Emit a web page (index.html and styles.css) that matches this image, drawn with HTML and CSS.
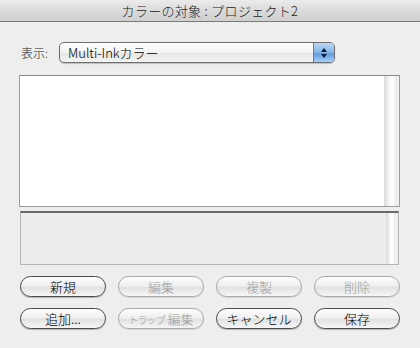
FILE: index.html
```html
<!DOCTYPE html>
<html lang="ja">
<head>
<meta charset="UTF-8">
<title>カラーの対象 : プロジェクト2</title>
<link rel="stylesheet" href="styles.css">
</head>
<body>
    <div class="window">
        <div class="titlebar">カラーの対象 : プロジェクト2</div>
        <div class="content">
            <div class="show-row">
                <span class="show-label">表示:</span>
                <div class="popup">
                    <span class="popup-text">Multi-Inkカラー</span>
                    <span class="popup-arrows">
                        <svg width="8" height="12" viewBox="0 0 8 12">
                            <path d="M4 1 L7 5 L1 5 Z" fill="#0d1d3a"/>
                            <path d="M4 11 L7 7 L1 7 Z" fill="#0d1d3a"/>
                        </svg>
                    </span>
                </div>
            </div>
            <div class="list">
                <div class="list-body"></div>
                <div class="scroll"></div>
            </div>
            <div class="info">
                <div class="info-body"></div>
                <div class="scroll scroll-small"></div>
            </div>
            <div class="buttons">
                <button class="btn">新規</button>
                <button class="btn" disabled>編集</button>
                <button class="btn" disabled>複製</button>
                <button class="btn" disabled>削除</button>
                <button class="btn">追加...</button>
                <button class="btn" disabled><span class="small-kana">トラップ</span> 編集</button>
                <button class="btn">キャンセル</button>
                <button class="btn">保存</button>
            </div>
        </div>
    </div>
</body>
</html>
```

FILE: styles.css
```css
body {
    margin: 0;
    padding: 0;
    background-color: #eeeeee;
    font-family: "Noto Sans CJK JP", "Noto Sans", sans-serif;
    font-size: 13px;
    font-weight: 300;
    color: #111;
}

.window {
    width: 420px;
    height: 348px;
    background-color: #eeeeee;
}

.titlebar {
    height: 21px;
    line-height: 21px;
    text-align: center;
    font-size: 13px;
    color: #222;
    letter-spacing: 0.3px;
    background: linear-gradient(#ececec, #dadada 50%, #cfcfcf);
    border-bottom: 1px solid #7a7a7a;
}

.content {
    padding: 20px 20px 0 20px;
}

.show-row {
    display: flex;
    align-items: center;
    gap: 7px;
    height: 21px;
}

.show-label {
    width: 31px;
    padding-left: 1px;
    font-size: 12px;
    color: #222;
}

.popup {
    display: flex;
    width: 274px;
    height: 19px;
    border: 1px solid #6e6e6e;
    border-radius: 5px;
    background: linear-gradient(#ffffff, #f3f3f3 50%, #e6e6e6 55%, #f4f4f4);
    box-shadow: 0 1px 1px rgba(0, 0, 0, 0.2);
    overflow: hidden;
}

.popup-text {
    flex: 1;
    padding-left: 8px;
    line-height: 19px;
    font-size: 13px;
    color: #000;
}

.popup-arrows {
    width: 20px;
    display: flex;
    align-items: center;
    justify-content: center;
    background: linear-gradient(#bcd8f5, #82b4ea 50%, #5d9ce2 55%, #a7d0f7);
    border-left: 1px solid #5a7fb0;
}

.list {
    display: flex;
    margin-top: 12px;
    height: 130px;
    border: 1px solid #9c9c9c;
    border-top-color: #8a8a8a;
    width: 379px;
    margin-left: -1px;
}

.list-body {
    flex: 1;
    background-color: #fff;
}

.scroll {
    width: 15px;
    background: linear-gradient(to right, #d7d7d7, #f3f3f3 30%, #ffffff 55%, #e9e9e9 85%, #f5f5f5);
}

.info {
    display: flex;
    margin-top: 4px;
    height: 51px;
    width: 377px;
    border: 1px solid #b5b5b5;
    border-top: 2px solid #6b6b6b;
    background-color: #ededed;
}

.info-body {
    flex: 1;
}

.scroll-small {
    width: 11px;
    margin-right: 1px;
}

.buttons {
    display: grid;
    grid-template-columns: repeat(4, 86px);
    column-gap: 12px;
    row-gap: 11px;
    margin-top: 11px;
}

.btn {
    height: 21px;
    padding: 0;
    border: 1px solid #4a4a4a;
    border-radius: 11px;
    background: linear-gradient(#fdfdfd, #f0f0f0 45%, #e2e2e2 55%, #f6f6f6);
    box-shadow: 0 1px 1px rgba(0, 0, 0, 0.25);
    font-family: "Noto Sans CJK JP", "Noto Sans", sans-serif;
    font-size: 13px;
    font-weight: 300;
    color: #000;
    line-height: 19px;
}

.btn:disabled {
    border-color: #a8a8a8;
    color: #a0a0a0;
    box-shadow: 0 1px 1px rgba(0, 0, 0, 0.1);
}

.small-kana {
    font-size: 10px;
    letter-spacing: -1px;
}
```
